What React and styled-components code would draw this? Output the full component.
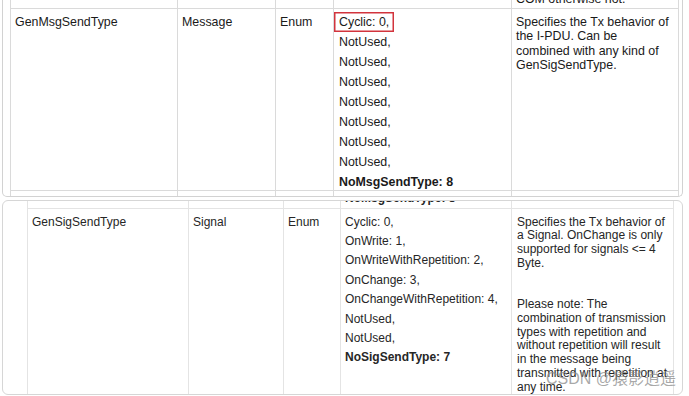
import React from 'react'
import styled, { createGlobalStyle } from 'styled-components'

const GlobalStyle = createGlobalStyle`
  html, body {
    margin: 0;
    padding: 0;
    background: #ffffff;
  }
  body {
    font-family: "Liberation Sans", Arial, sans-serif;
  }
`

const Page = styled.div`
  display: flex;
  flex-direction: column;
  gap: 3px;
  padding-left: 2px;
  width: 681px;
`

const Panel = styled.div`
  position: relative;
  box-sizing: border-box;
  width: 681px;
  height: ${p => p.$h}px;
  border: 1px solid ${p => p.$border};
  ${p => p.$cut && 'border-top: none;'}
  border-radius: ${p => (p.$cut ? '0 0 5px 5px' : '6px')};
  padding-left: ${p => p.$inset}px;
  overflow: hidden;
  font-size: ${p => p.$fs}px;
  color: ${p => p.$ink};
`

const Table = styled.div`
  --line: ${p => p.$line};
  border-left: 1px solid var(--line);
  width: fit-content;
`

const Row = styled.div`
  display: grid;
  grid-template-columns: ${p => p.$cols};
  box-sizing: border-box;
  height: ${p => p.$h}px;
  border-bottom: ${p => (p.$ruled ? '1px solid var(--line)' : 'none')};
`

const Cell = styled.div`
  box-sizing: border-box;
  border-right: 1px solid var(--line);
  padding: ${p => p.$top || 0}px 0 0 ${p => p.$left || 4}px;
  overflow: hidden;
  white-space: nowrap;
  line-height: ${p => p.$lh}px;
`

const Line = styled.div`
  line-height: ${p => p.$lh}px;
  font-weight: ${p => (p.$bold ? 700 : 400)};
  ${p => p.$shift && `margin-top: ${p.$shift}px;`}
`

const Marked = styled.span`
  display: inline-block;
  margin-left: -5px;
  padding: 0 5px;
  box-shadow: inset 0 0 0 1.5px #d2343d;
`

const Para = styled.div`
  line-height: ${p => p.$lh}px;
  & + & {
    margin-top: ${p => p.$gap}px;
  }
`

const Watermark = styled.div`
  position: absolute;
  right: 6px;
  bottom: 7px;
  font-family: "Liberation Sans", "Noto Sans CJK SC", sans-serif;
  font-size: 16px;
  line-height: 16px;
  color: rgba(140, 140, 140, 0.75);
  white-space: nowrap;
`

const COLS_A = '167px 98px 58px 178px 167px'
const COLS_B = '161px 95px 57px 171px 162px'

const msgValues = ['NotUsed,', 'NotUsed,', 'NotUsed,', 'NotUsed,', 'NotUsed,', 'NotUsed,', 'NotUsed,']
const sigValues = [
  'Cyclic: 0,',
  'OnWrite: 1,',
  'OnWriteWithRepetition: 2,',
  'OnChange: 3,',
  'OnChangeWithRepetition: 4,',
  'NotUsed,',
  'NotUsed,',
]

const MsgPanel = () => (
  <Panel $cut $h={197} $inset={7} $fs={12.4} $ink="#1a1a1a" $border="#d2d2d2">
    <Table $line="#dadada">
      <Row $cols={COLS_A} $h={9} $ruled>
        <Cell />
        <Cell />
        <Cell />
        <Cell />
        <Cell $lh={14.3}>
          <Line $lh={14.3} $shift={-8}>COM otherwise not.</Line>
        </Cell>
      </Row>
      <Row $cols={COLS_A} $h={182} $ruled>
        <Cell $top={3} $lh={20}>GenMsgSendType</Cell>
        <Cell $top={3} $lh={20}>Message</Cell>
        <Cell $top={3} $lh={20}>Enum</Cell>
        <Cell $top={3} $left={5}>
          <Line $lh={20}>
            <Marked>Cyclic: 0,</Marked>
          </Line>
          {msgValues.map((v, i) => (
            <Line key={i} $lh={20}>{v}</Line>
          ))}
          <Line $lh={20} $bold>NoMsgSendType: 8</Line>
        </Cell>
        <Cell $top={6}>
          <Para $lh={14.3}>
            Specifies the Tx behavior of<br />
            the I-PDU. Can be<br />
            combined with any kind of<br />
            GenSigSendType.
          </Para>
        </Cell>
      </Row>
      <Row $cols={COLS_A} $h={5}>
        <Cell />
        <Cell />
        <Cell />
        <Cell />
        <Cell />
      </Row>
    </Table>
  </Panel>
)

const SigPanel = () => (
  <Panel $h={195} $inset={24} $fs={12} $ink="#262626" $border="#d6d6d6">
    <Table $line="#e4e4e4">
      <Row $cols={COLS_B} $h={8} $ruled>
        <Cell />
        <Cell />
        <Cell />
        <Cell>
          <Line $lh={19.4} $bold $shift={-12.5}>NoMsgSendType: 8</Line>
        </Cell>
        <Cell />
      </Row>
      <Row $cols={COLS_B} $h={185}>
        <Cell $top={3.5} $lh={19.4}>GenSigSendType</Cell>
        <Cell $top={3.5} $lh={19.4}>Signal</Cell>
        <Cell $top={3.5} $lh={19.4}>Enum</Cell>
        <Cell $top={3.5}>
          {sigValues.map((v, i) => (
            <Line key={i} $lh={19.4}>{v}</Line>
          ))}
          <Line $lh={19.4} $bold>NoSigSendType: 7</Line>
        </Cell>
        <Cell $top={6.5} $left={5}>
          <Para $lh={13.7} $gap={28}>
            Specifies the Tx behavior of<br />
            a Signal. OnChange is only<br />
            supported for signals &lt;= 4<br />
            Byte.
          </Para>
          <Para $lh={13.7} $gap={28}>
            Please note: The<br />
            combination of transmission<br />
            types with repetition and<br />
            without repetition will result<br />
            in the message being<br />
            transmitted with repetition at<br />
            any time.
          </Para>
        </Cell>
      </Row>
    </Table>
    <Watermark>CSDN @猿影逍遥</Watermark>
  </Panel>
)

const App = () => {
  return (
    <>
      <GlobalStyle />
      <Page>
        <MsgPanel />
        <SigPanel />
      </Page>
    </>
  )
}

export default App
